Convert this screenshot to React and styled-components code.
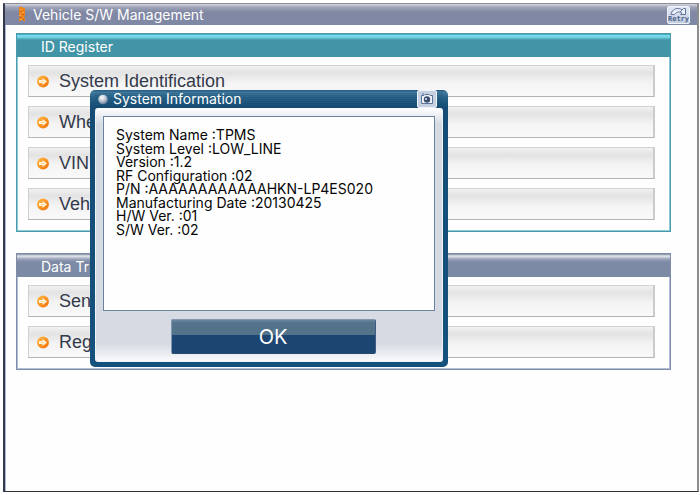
import React from "react";
import styled, { createGlobalStyle } from "styled-components";

const GlobalStyle = createGlobalStyle`
  * { box-sizing: border-box; }
  html, body, #root { height: 100%; }
  body { margin: 0; background: #fefefe; font-family: Inter, "Liberation Sans", sans-serif; }
  button { font-family: inherit; margin: 0; padding: 0; cursor: pointer; }
  h1, h2, p, ul { margin: 0; padding: 0; font-weight: 400; }
`;

const Page = styled.div`
  min-height: 100%;
  display: flex;
  padding: 3px 1px 3px 3px;
  position: relative;
`;

const Frame = styled.main`
  flex: 1;
  border: solid;
  border-width: 1px 2px 1px 2px;
  border-color: #8b8c96 #8d8d8d #303036 #35394b;
  box-shadow: inset 1px 0 #a9b9d4;
`;

const TitleBar = styled.header`
  display: flex;
  align-items: center;
  height: 21px;
  padding: 0 7px 0 13px;
  gap: 7px;
  color: #fff;
  background: linear-gradient(#d5d8e0 0, #a0a5b9 3px, #8188a4 8px, #7e88a4 100%);
`;

const Title = styled.h1`
  flex: 1;
  font-size: 14px;
  line-height: 18px;
`;

const RetryButton = styled.button`
  display: flex;
  flex-direction: column;
  align-items: center;
  width: 23px;
  height: 18px;
  border: 1px solid #eef2fa;
  border-radius: 2px;
  background: linear-gradient(#e2e9f4, #c0ccdf);
  color: #4b5f88;
  font-family: "DejaVu Sans Mono", monospace;
  font-size: 7px;
  font-weight: 700;
  line-height: 7px;
`;

const Panels = styled.div`
  display: flex;
  flex-direction: column;
  gap: 21px;
  padding: 8px 26px 8px 11px;
`;

const tones = {
  teal: { line: "#499aab", edge: "#8fcbd5", head: "linear-gradient(#257d92 0, #75dded 1px, #78d6e6 3px, #4295a7 6px, #4295a7 100%)" },
  slate: { line: "#7e8ca8", edge: "#b5bed6", head: "linear-gradient(#7a84a0 0, #e7e9ee 2px, #9ba4b9 5px, #7d8aa5 8px, #7d8aa5 100%)" },
};

const PanelBox = styled.section`
  border: 1px solid ${(p) => tones[p.$tone].line};
  box-shadow: inset 0 0 0 1px ${(p) => tones[p.$tone].edge};
`;

const PanelHead = styled.h2`
  height: 23px;
  padding: 2px 0 0 24px;
  font-size: 14px;
  line-height: 22px;
  color: #fff;
  background: ${(p) => tones[p.$tone].head};
`;

const Rows = styled.div`
  display: flex;
  flex-direction: column;
  gap: 9px;
  padding: 8px 15px 11px 11px;
`;

const Row = styled.button`
  display: flex;
  align-items: center;
  gap: 10px;
  height: 32px;
  padding-left: 8px;
  border: solid;
  border-width: 1px 2px 1px 1px;
  border-color: #d2d2d2 #cbcbcb #b4b4b4 #d0d0d0;
  background: linear-gradient(#f1f1f1 0, #e3e3e3 7px, #f4f4f4 17px, #f9f9f9 100%);
  color: #343a4c;
  font-family: "Liberation Sans", sans-serif;
  font-size: 18px;
  line-height: 24px;
  text-align: left;
`;

const DialogBox = styled.div`
  position: absolute;
  left: 90px;
  top: 90px;
  width: 358px;
  padding: 0 5px 5px;
  border-radius: 5px;
  background: linear-gradient(#235a83 0, #467d9f 2px, #286489 7px, #164c75 17px, #14527d 100%);
`;

const DialogHead = styled.div`
  display: flex;
  align-items: center;
  gap: 5px;
  height: 18px;
  padding: 0 6px 0 3px;
  background: repeating-linear-gradient(transparent 0 1px, #12436a40 1px 2px);
`;

const DialogTitle = styled.h2`
  flex: 1;
  font-size: 14px;
  line-height: 18px;
  color: #fff;
`;

const CameraButton = styled.button`
  display: grid;
  place-items: center;
  width: 20px;
  height: 18px;
  border: 1px solid #f0f4fa;
  border-radius: 2px;
  background: #c5d0e2;
`;

const DialogBody = styled.div`
  display: flex;
  flex-direction: column;
  align-items: center;
  gap: 8px;
  padding: 8px 7px 7px;
  border: 1px solid #eff2f7;
  border-top: 0;
  border-radius: 3px;
  background: linear-gradient(#fff 0, #d5dae3 16px, #d5dae3 93%, #fafafc 100%);
`;

const Info = styled.ul`
  align-self: stretch;
  min-height: 195px;
  padding: 11px 12px 74px;
  display: grid;
  grid-auto-rows: 1fr;
  border: 1px solid #6b839c;
  background: #fefefe;
  list-style: none;
  color: #050505;
  font-size: 14px;
  line-height: 13px;
`;

const OkButton = styled.button`
  width: 205px;
  height: 35px;
  margin-left: 8px;
  border: 1px solid #8396b0;
  border-color: #8396b0 #3f5c82 #284870 #8396b0;
  border-radius: 2px;
  background: linear-gradient(#6c87a0 0, #527389 3px, #527389 45%, #1c4571 46%, #1c4571 100%);
  color: #fff;
  font-size: 20px;
  line-height: 32px;
`;

const Flame = () => (
  <svg width="8" height="15" viewBox="0 0 8 15" aria-hidden="true">
    <path d="M1 0h4v1h2v8l-1 1v1h1v3H5v-1H3v1H1v-3l1-1-1-1z" fill="#f08118" />
    <path d="M2 2h2v1H2zM4 5h2v1H4zM1 8h2v1H1zM4 10h1v1H4zM2 12h2v1H2z" fill="#ffa53a" />
    <path d="M3 4h1v1H3zM5 7h1v1H5zM2 10h2v1H2zM5 12h1v1H5z" fill="#b75a2c" />
  </svg>
);

const Bullet = () => (
  <svg width="12" height="13" viewBox="0 0 13 13" aria-hidden="true">
    <defs>
      <linearGradient id="orange" x1="0" y1="0" x2="1" y2="1">
        <stop offset="0" stopColor="#ffbd4a" />
        <stop offset="1" stopColor="#f26d00" />
      </linearGradient>
    </defs>
    <circle cx="6.5" cy="6.5" r="6.4" fill="url(#orange)" />
    <path d="M2.2 5H6V2.6l4.8 3.9L6 10.4V8H2.2z" fill="#fff4dc" />
    <path d="M4 6.5h4" stroke="#ffc36b" strokeWidth=".7" />
  </svg>
);

const RetryIcon = () => (
  <svg width="17" height="9" viewBox="0 0 17 9" fill="none" stroke="#60739a" aria-hidden="true">
    <path d="M1 7.5C1.5 4 4.5 1.2 8.5 1.5c1.5.1 2.5.6 3.5 1.5l1.5-1.5H15.500v6H10.500L12 6C10 4.300 7 4.500 4.500 7.500z" fill="#e9eff8" />
    <path d="M12 3l-2 2" />
  </svg>
);

const Orb = () => (
  <svg width="10" height="11" viewBox="0 0 10 11" aria-hidden="true">
    <defs>
      <radialGradient id="orb" cx=".4" cy=".3" r=".7">
        <stop offset="0" stopColor="#fff" />
        <stop offset=".5" stopColor="#c3c8d4" />
        <stop offset="1" stopColor="#65809d" />
      </radialGradient>
    </defs>
    <circle cx="5" cy="5.5" r="4.8" fill="url(#orb)" />
  </svg>
);

const Camera = () => (
  <svg width="14" height="12" viewBox="0 0 14 12" aria-hidden="true">
    <path d="M1.500 2.500h2.500l1-1h4l1 1h2.500v8h-11z" fill="#eef2f8" stroke="#5c7496" />
    <circle cx="7" cy="6.500" r="3.200" fill="#3c5071" />
    <path d="M5 5h2v2H5z" fill="#b7c5d9" />
    <path d="M2 1h2" stroke="#5c7496" />
  </svg>
);

const panels = [
  { title: "ID Register", tone: "teal", rows: ["System Identification", "Whe", "VIN", "Veh"] },
  { title: "Data Tr", tone: "slate", rows: ["Sen", "Reg"] },
];

const info = [
  "System Name :TPMS",
  "System Level :LOW_LINE",
  "Version :1.2",
  "RF Configuration :02",
  "P/N :AAAAAAAAAAAAHKN-LP4ES020",
  "Manufacturing Date :20130425",
  "H/W Ver. :01",
  "S/W Ver. :02",
];

export default function App() {
  return (
    <Page>
      <GlobalStyle />
      <Frame>
        <TitleBar>
          <Flame />
          <Title>Vehicle S/W Management</Title>
          <RetryButton type="button"><RetryIcon />Retry</RetryButton>
        </TitleBar>
        <Panels>
          {panels.map((p) => (
            <PanelBox key={p.title} $tone={p.tone}>
              <PanelHead $tone={p.tone}>{p.title}</PanelHead>
              <Rows>
                {p.rows.map((r) => (
                  <Row key={r} type="button"><Bullet />{r}</Row>
                ))}
              </Rows>
            </PanelBox>
          ))}
        </Panels>
      </Frame>
      <DialogBox role="dialog" aria-labelledby="dialog-title">
        <DialogHead>
          <Orb />
          <DialogTitle id="dialog-title">System Information</DialogTitle>
          <CameraButton type="button" aria-label="Capture"><Camera /></CameraButton>
        </DialogHead>
        <DialogBody>
          <Info>
            {info.map((line) => <li key={line}>{line}</li>)}
          </Info>
          <OkButton type="button">OK</OkButton>
        </DialogBody>
      </DialogBox>
    </Page>
  );
}
